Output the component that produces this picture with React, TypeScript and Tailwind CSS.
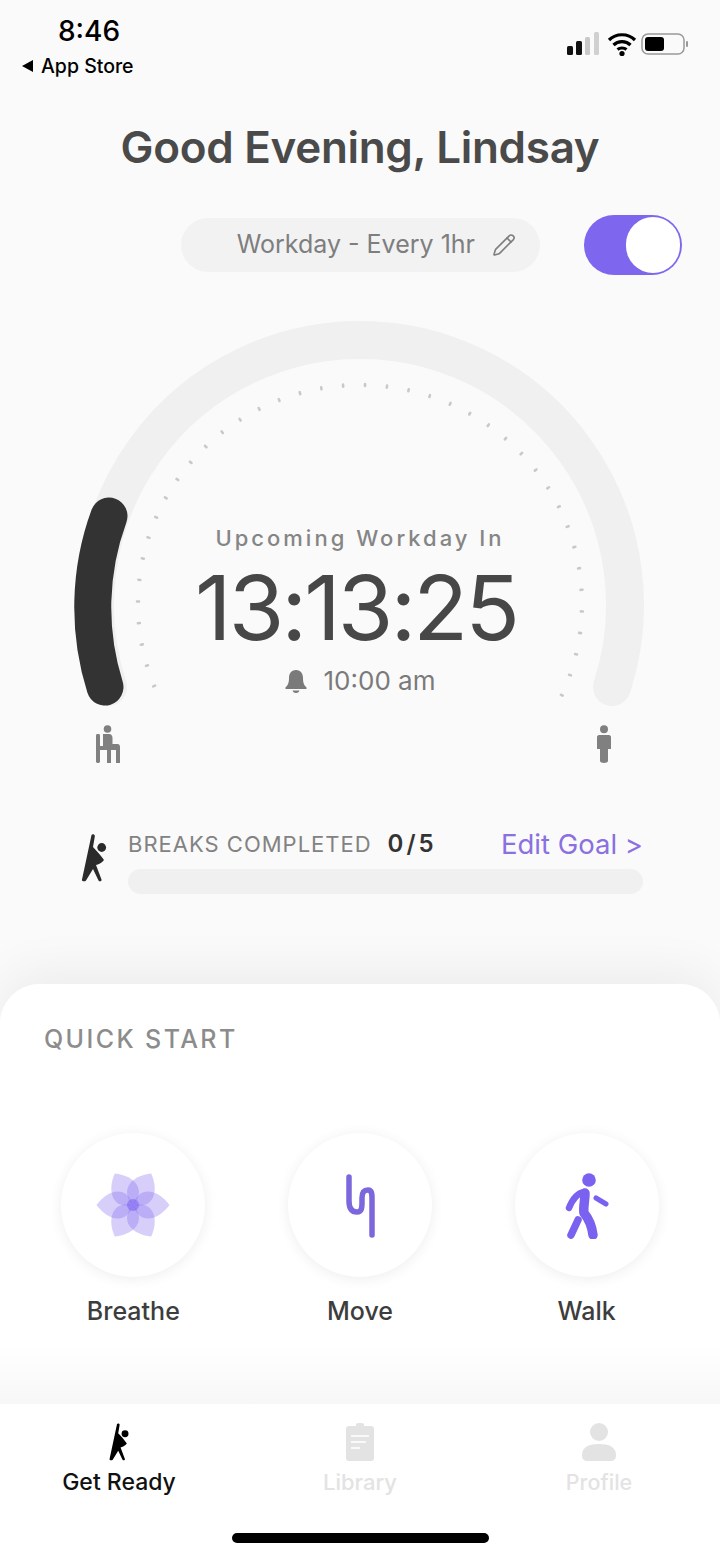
import { Pencil } from 'lucide-react';

const FONT = "font-['Inter','Noto_Sans',sans-serif]";

function StretchIcon({ className }: { className?: string }) {
  return (
    <svg viewBox="0 0 28 48" className={className} fill="currentColor">
      <circle cx="21.7" cy="13.5" r="4.4" />
      <path d="M11.5 1 C12.5 -0.2 15 0.3 14.8 2.5 L13 13 C17 17 21 22 24 26 C22 29 18 30.5 16 31 L21.5 45.5 C22 47.5 19.5 48 18.5 46.5 L13 35 L6 46.5 C5 48 1.5 47.5 2 45.5 Z" />
    </svg>
  );
}

function Flower() {
  const angles = [0, 60, 120, 180, 240, 300];
  return (
    <svg viewBox="-38 -38 76 76" className="w-[76px] h-[76px]">
      {angles.map((a) => (
        <path
          key={a}
          d="M0 0 C6 -19 24 -17 36.5 0 C24 17 6 19 0 0 Z"
          fill="#7b61f0"
          fillOpacity="0.3"
          transform={`rotate(${a})`}
        />
      ))}
      <circle r="6" fill="#7b61f0" fillOpacity="0.55" />
    </svg>
  );
}

function MoveIcon() {
  return (
    <svg viewBox="0 0 32 68" className="w-8 h-[68px]" fill="none" stroke="#7c68dc" strokeWidth="5.5" strokeLinecap="round">
      <path d="M5 6 V30 C5 38 8 41 13 41 C18 41 18 36 18 32 V27 C18 21 20 19 24 19 C28 19 28 23 28 28 V64" />
    </svg>
  );
}

function WalkIcon() {
  return (
    <svg viewBox="0 0 44 68" className="w-11 h-[68px]" fill="none" stroke="#7b61f0" strokeLinecap="round" strokeLinejoin="round">
      <circle cx="24" cy="9" r="6.8" fill="#7b61f0" stroke="none" />
      <path d="M19 21 C13 22 8 27 4 37" strokeWidth="6.5" />
      <path d="M20 22 C20 30 18 36 19 42 C24 48 27 56 28 64" strokeWidth="9.5" />
      <path d="M13 49 L6 64" strokeWidth="7.5" />
      <path d="M31 27 L41 33" strokeWidth="5" />
    </svg>
  );
}

function Gauge() {
  const cx = 360;
  const cy = 305;
  const r = 265;
  const ticks = Array.from({ length: 41 }, (_, i) => {
    const deg = 158 + i * 5.665;
    const rad = (deg * Math.PI) / 180;
    const c = Math.cos(rad);
    const s = Math.sin(rad);
    return {
      x1: cx + 221 * c,
      y1: cy + 218 * s,
      x2: cx + 223 * c,
      y2: cy + 220 * s,
    };
  });
  return (
    <svg viewBox="0 0 720 410" className="w-[720px] h-[410px] block">
      <path d={`M108 388 A${r} ${r} 0 1 1 612 388`} fill="none" stroke="#f0f0f0" strokeWidth="38" strokeLinecap="round" />
      {ticks.map((t, i) => (
        <line key={i} x1={t.x1} y1={t.y1} x2={t.x2} y2={t.y2} stroke="#c9c9c9" strokeWidth="2.6" strokeLinecap="round" />
      ))}
      <path d={`M109 217 A${r} ${r} 0 0 0 105 388`} fill="none" stroke="#333333" strokeWidth="37" strokeLinecap="round" />
    </svg>
  );
}

export default function App() {
  return (
    <div className={`w-[720px] h-[1558px] bg-[#fafafa] flex flex-col overflow-hidden ${FONT}`}>
      {/* status bar */}
      <div className="h-[88px] flex justify-between pl-[22px] pr-[30px] pt-[15px] text-black">
        <div className="flex flex-col">
          <span className="text-[28px] leading-[32px] ml-[36px] font-medium">8:46</span>
          <span className="text-[19.5px] leading-[24px] mt-[7px] flex items-center gap-[8px] font-medium">
            <span className="w-0 h-0 border-y-[6px] border-y-transparent border-r-[11px] border-r-black" />
            App Store
          </span>
        </div>
        <svg viewBox="0 0 124 26" className="w-[124px] h-[26px] mt-[17px]">
          <rect x="1" y="14" width="6" height="9" rx="1.5" fill="#111" />
          <rect x="10" y="9" width="6" height="14" rx="1.5" fill="#111" />
          <rect x="19" y="5" width="5" height="18" rx="1.5" fill="#c8c8c8" />
          <rect x="28" y="0" width="5" height="23" rx="1.5" fill="#d0d0d0" />
          <path d="M43 8 C50 1 62 1 69 8 M47.5 13 C52 8.5 60 8.5 64.5 13 M51.5 17.5 C54 15.5 58 15.5 60.5 17.5" fill="none" stroke="#000" strokeWidth="3.2" />
          <circle cx="56" cy="21.5" r="2.6" fill="#000" />
          <rect x="76" y="2" width="42" height="20" rx="6" fill="#fafafa" stroke="#999" strokeWidth="1.5" />
          <rect x="79" y="5" width="19" height="14" rx="3" fill="#000" />
          <rect x="120" y="9" width="2" height="6" rx="1" fill="#999" />
        </svg>
      </div>

      <h1 className="text-center text-[44px] leading-[50px] font-semibold text-[#4a4a4a] mt-[34px] tracking-[-0.3px]">
        Good Evening, Lindsay
      </h1>

      {/* schedule row */}
      <div className="flex items-center mt-[43px] pl-[181px]">
        <div className="w-[359px] h-[54px] rounded-full bg-[#f2f2f2] flex items-center justify-end pr-[24px] gap-[17px] text-[#7e7e7e] text-[25px]">
          <span>Workday - Every 1hr</span>
          <Pencil className="w-6 h-6" strokeWidth={1.6} />
        </div>
        <div className="ml-[44px] w-[98px] h-[60px] rounded-full bg-[#7e66ee] flex items-center justify-end pr-[2px]">
          <div className="w-[54px] h-[56px] rounded-full bg-white" />
        </div>
      </div>

      {/* gauge with readout on top */}
      <div className="relative mt-[24px]">
        <Gauge />
        <div className="absolute left-0 right-0 top-[225px] flex flex-col items-center">
          <span className="text-[22px] leading-[28px] tracking-[3px] font-medium text-[#858585]">Upcoming Workday In</span>
          <span className="text-[90px] leading-[100px] mt-[6px] mr-[8px] text-[#474747] tracking-[-3px]">13:13:25</span>
          <div className="flex items-center gap-[17px] mt-[6px] text-[#7a7a7a]">
            <svg viewBox="0 0 22 24" className="w-[22px] h-6" fill="currentColor">
              <path d="M11 1 C6 1 4 5 4 9 C4 14 3 16 0.5 18.5 V20 H21.5 V18.5 C19 16 18 14 18 9 C18 5 16 1 11 1 Z" />
              <path d="M7.5 21.5 H14.5 C14 23.2 12.5 24 11 24 C9.5 24 8 23.2 7.5 21.5 Z" />
            </svg>
            <span className="text-[26px] leading-[34px]">10:00 am</span>
          </div>
        </div>
      </div>

      {/* posture icons */}
      <div className="flex justify-between pl-[96px] pr-[109px] mt-[16px] h-[41px] text-[#808080]">
        <svg viewBox="0 0 24 38" className="w-6 h-[38px]" fill="currentColor">
          <circle cx="11.5" cy="4" r="3.8" />
          <rect x="0" y="9" width="4" height="29" rx="1.4" />
          <path d="M7 9 H13 C15.5 9 16.5 11 16.5 13 V19 H21.5 C23.2 19 24 20 24 22 V38 H20 V25 H15 V38 H11 V25 H4 V21 H7 Z" />
        </svg>
        <svg viewBox="0 0 14 38" className="w-[14px] h-[38px]" fill="currentColor">
          <circle cx="7" cy="4.2" r="4" />
          <path d="M2 10 H12 C13.2 10 14 11 14 12 V24 H11 V36 C11 38.5 3 38.5 3 36 V24 H0 V12 C0 11 0.8 10 2 10 Z" />
        </svg>
      </div>

      {/* breaks */}
      <div className="flex pl-[80px] pr-[77px] mt-[59px] gap-[20px]">
        <StretchIcon className="w-[28px] h-[48px] mt-[9px] text-[#2b2b2b]" />
        <div className="flex-1 flex flex-col">
          <div className="flex items-center h-[44px] pb-[6px]">
            <span className="text-[22px] leading-[30px] tracking-[1px] text-[#828282]">BREAKS COMPLETED</span>
            <span className="text-[24px] leading-[30px] ml-[16px] tracking-[3px] font-semibold text-[#333]">0/5</span>
            <span className="ml-auto text-[27.5px] leading-[30px] text-[#8a70e0]">Edit Goal &gt;</span>
          </div>
          <div className="h-[25px] rounded-full bg-[#f0f0f0]" />
        </div>
      </div>

      {/* quick start card */}
      <div className="mt-[90px] flex-1 rounded-t-[40px] overflow-hidden bg-white shadow-[0_-12px_50px_rgba(0,0,0,0.06)] flex flex-col">
        <div className="flex-1 flex flex-col bg-gradient-to-b from-white from-[86%] to-[#f7f7f7]">
          <h2 className="text-[25px] leading-[32px] tracking-[2.4px] font-medium text-[#8c8c8c] pl-[44px] mt-[39px]">QUICK START</h2>
          <div className="grid grid-cols-3 pl-[20px] pr-[20px] mt-[78px]">
            {[
              { label: 'Breathe', icon: <Flower /> },
              { label: 'Move', icon: <MoveIcon /> },
              { label: 'Walk', icon: <WalkIcon /> },
            ].map((item) => (
              <div key={item.label} className="flex flex-col items-center">
                <div className="w-[144px] h-[144px] rounded-full bg-white shadow-[0_2px_14px_rgba(0,0,0,0.07)] flex items-center justify-center">
                  {item.icon}
                </div>
                <span className="text-[25px] leading-[32px] mt-[18px] font-medium text-[#3d3d3d]">{item.label}</span>
              </div>
            ))}
          </div>
        </div>

        {/* tab bar */}
        <div className="h-[154px] bg-white flex flex-col">
          <div className="grid grid-cols-3 pt-[19px]">
            <div className="flex flex-col items-center pr-[2px]">
              <StretchIcon className="w-[22px] h-[38px] text-black" />
              <span className="text-[23px] leading-[30px] mt-[6px] font-medium text-[#111]">Get Ready</span>
            </div>
            <div className="flex flex-col items-center text-[#e3e3e3]">
              <svg viewBox="0 0 28 38" className="w-7 h-[38px]">
                <rect x="0" y="3" width="28" height="35" rx="3" fill="#e3e3e3" />
                <rect x="10" y="0" width="8" height="6" rx="2" fill="#e3e3e3" />
                <path d="M5 13 H23 M5 19 H20 M5 25 H14" stroke="#fff" strokeWidth="2" opacity="0.8" />
              </svg>
              <span className="text-[22px] leading-[30px] mt-[6px] font-medium">Library</span>
            </div>
            <div className="flex flex-col items-center text-[#e3e3e3] pr-[2px]">
              <svg viewBox="0 0 34 38" className="w-[34px] h-[38px]" fill="currentColor">
                <circle cx="17" cy="9" r="9" />
                <path d="M0 32 C0 24 7 21 17 21 C27 21 34 24 34 32 C34 36 32 38 28 38 H6 C2 38 0 36 0 32 Z" />
              </svg>
              <span className="text-[21.5px] leading-[30px] mt-[6px] font-medium">Profile</span>
            </div>
          </div>
          <div className="w-[257px] h-[10px] rounded-full bg-black mx-auto mt-[36px]" />
        </div>
      </div>
    </div>
  );
}
